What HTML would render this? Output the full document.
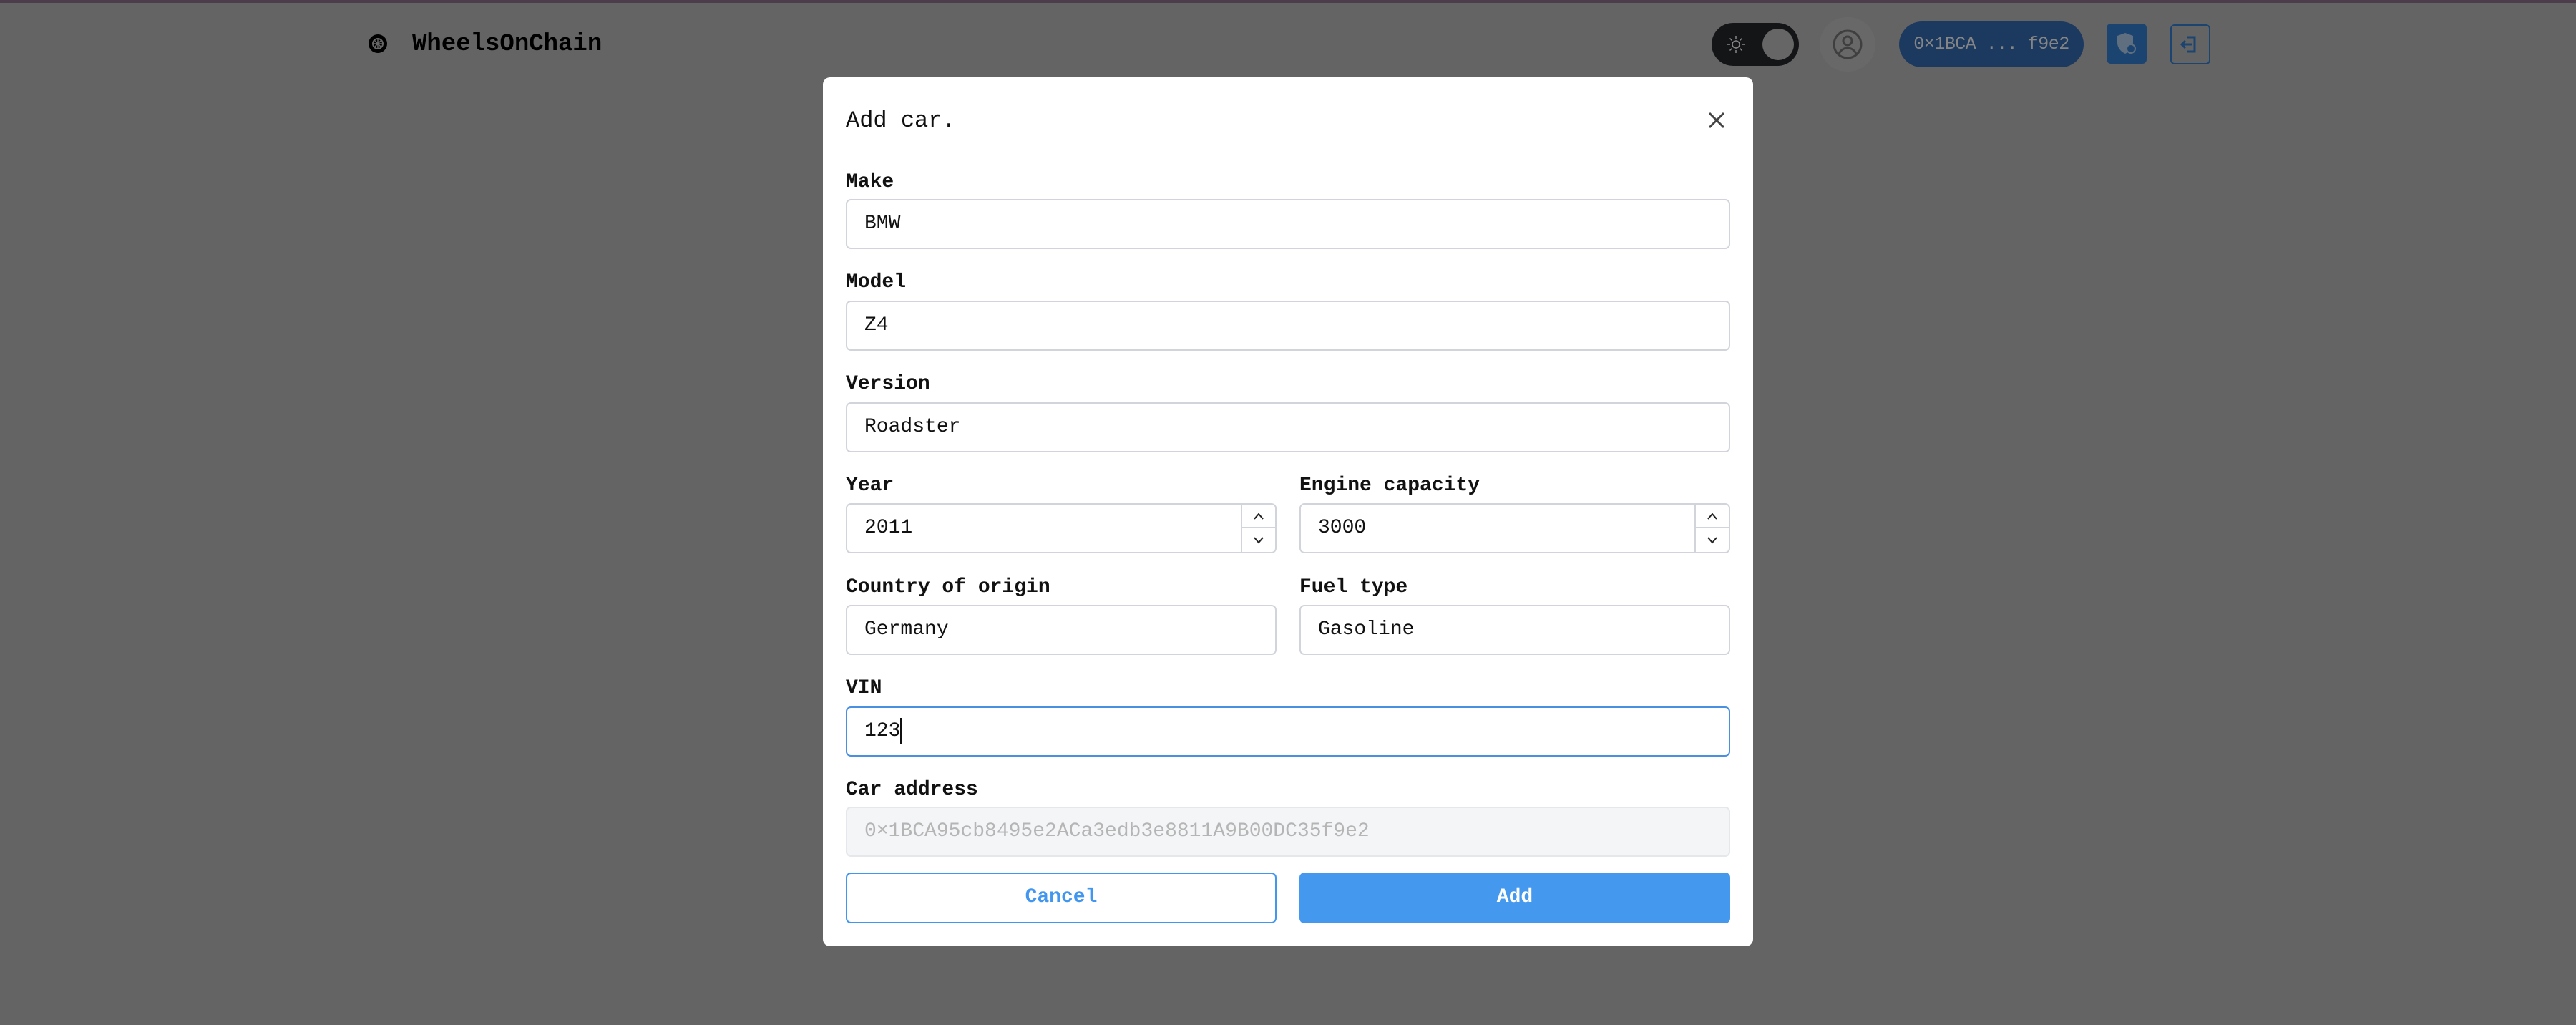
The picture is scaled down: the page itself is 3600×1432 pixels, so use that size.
<!DOCTYPE html>
<html><head><meta charset="utf-8"><style>
*{box-sizing:border-box;margin:0;padding:0}
body{width:3600px;height:1432px;background:#646464;position:relative;overflow:hidden;font-family:"Liberation Mono",monospace;}
.topline{position:absolute;left:0;top:0;width:3600px;height:4px;background:#4d3c4b}
.a{position:absolute}
.lbl{position:absolute;font-size:28px;font-weight:bold;color:#111;line-height:34px}
.inp{position:absolute;height:70px;border:2px solid #d1d5db;border-radius:7px;background:#fff;font-size:28px;color:#111;line-height:66px;padding-left:24px}
.spin{position:absolute;right:0;top:0;width:48px;height:66px;border-left:2px solid #d1d5db}
.spin div{height:33px;border-bottom:2px solid #d1d5db;display:flex;align-items:center;justify-content:center}
.spin div:last-child{border-bottom:none}
</style></head><body>
<div class="topline"></div>
<svg class="a" style="left:513px;top:46px" width="30" height="30" viewBox="0 0 30 30"><circle cx="15" cy="15" r="13" fill="#000"/><circle cx="15" cy="15" r="7" fill="none" stroke="#666" stroke-width="2"/><path d="M15 8v14M8 15h14M10 10l10 10M20 10l-10 10" stroke="#666" stroke-width="1.5"/></svg>
<div class="a" style="left:576px;top:42px;font-size:34px;font-weight:bold;color:#000;line-height:40px">WheelsOnChain</div>

<div class="a" style="left:2392px;top:32px;width:122px;height:60px;border-radius:30px;background:#141517"></div>
<svg class="a" style="left:2412px;top:48px" width="28" height="28" viewBox="0 0 28 28"><circle cx="14" cy="14" r="5" fill="none" stroke="#888" stroke-width="1.5"/><path d="M14 2v4M14 22v4M2 14h4M22 14h4M5.5 5.5l3 3M19.5 19.5l3 3M5.5 22.5l3-3M19.5 8.5l3-3" stroke="#888" stroke-width="1.5"/></svg>
<div class="a" style="left:2463px;top:40px;width:44px;height:44px;border-radius:22px;background:#666"></div>
<div class="a" style="left:2543px;top:24px;width:78px;height:76px;border-radius:39px;background:#686868"></div>
<svg class="a" style="left:2560px;top:40px" width="44" height="44" viewBox="0 0 44 44"><circle cx="22" cy="22" r="19" fill="none" stroke="#3f3f3f" stroke-width="3"/><circle cx="22" cy="17" r="6" fill="none" stroke="#3f3f3f" stroke-width="3"/><path d="M10 35c3-6 8-8 12-8s9 2 12 8" fill="none" stroke="#3f3f3f" stroke-width="3"/></svg>
<div class="a" style="left:2654px;top:30px;width:258px;height:64px;border-radius:32px;background:#1c3a60;color:#858585;font-size:25px;line-height:64px;text-align:center;letter-spacing:-0.5px">0×1BCA ... f9e2</div>
<div class="a" style="left:2944px;top:33px;width:56px;height:56px;border-radius:6px;background:#1c4470"></div>
<svg class="a" style="left:2956px;top:44px" width="32" height="34" viewBox="0 0 32 34"><path d="M14 2l11 4v9c0 8-5 13-11 16C8 28 3 23 3 15V6z" fill="#5f6f7f"/><circle cx="22" cy="24" r="6" fill="#1c4470" stroke="#5f6f7f" stroke-width="2"/></svg>
<div class="a" style="left:3033px;top:34px;width:56px;height:56px;border-radius:6px;border:2px solid #1c4470"></div>
<svg class="a" style="left:3043px;top:44px" width="36" height="36" viewBox="0 0 36 36"><path d="M14 8h10v20H14" fill="none" stroke="#1c4470" stroke-width="3"/><path d="M20 18H6M11 13l-5 5 5 5" fill="none" stroke="#1c4470" stroke-width="3"/></svg>

<div class="a" style="left:1150px;top:108px;width:1300px;height:1214px;background:#fff;border-radius:10px"></div>
<div class="a" style="left:1182px;top:150px;font-size:32px;color:#111;line-height:38px">Add car.</div>
<svg class="a" style="left:2385px;top:154px" width="28" height="28" viewBox="0 0 28 28"><path d="M4 4l20 20M24 4L4 24" stroke="#444" stroke-width="3"/></svg>

<div class="lbl" style="left:1182px;top:238px">Make</div>
<div class="inp" style="left:1182px;top:278px;width:1236px">BMW</div>
<div class="lbl" style="left:1182px;top:378px">Model</div>
<div class="inp" style="left:1182px;top:420px;width:1236px">Z4</div>
<div class="lbl" style="left:1182px;top:520px">Version</div>
<div class="inp" style="left:1182px;top:562px;width:1236px">Roadster</div>
<div class="lbl" style="left:1182px;top:662px">Year</div>
<div class="inp" style="left:1182px;top:703px;width:602px">2011<div class="spin"><div><svg width="18" height="12"><path d="M3 10l6-7 6 7" fill="none" stroke="#222" stroke-width="2"/></svg></div><div><svg width="18" height="12"><path d="M3 2l6 7 6-7" fill="none" stroke="#222" stroke-width="2"/></svg></div></div></div>
<div class="lbl" style="left:1816px;top:662px">Engine capacity</div>
<div class="inp" style="left:1816px;top:703px;width:602px">3000<div class="spin"><div><svg width="18" height="12"><path d="M3 10l6-7 6 7" fill="none" stroke="#222" stroke-width="2"/></svg></div><div><svg width="18" height="12"><path d="M3 2l6 7 6-7" fill="none" stroke="#222" stroke-width="2"/></svg></div></div></div>
<div class="lbl" style="left:1182px;top:804px">Country of origin</div>
<div class="inp" style="left:1182px;top:845px;width:602px">Germany</div>
<div class="lbl" style="left:1816px;top:804px">Fuel type</div>
<div class="inp" style="left:1816px;top:845px;width:602px">Gasoline</div>
<div class="lbl" style="left:1182px;top:945px">VIN</div>
<div class="inp" style="left:1182px;top:987px;width:1236px;border-color:#4a90e2">123<span style="display:inline-block;width:2px;height:36px;background:#111;vertical-align:middle"></span></div>
<div class="lbl" style="left:1182px;top:1087px">Car address</div>
<div class="inp" style="left:1182px;top:1127px;width:1236px;background:#f4f5f7;border-color:#e5e7eb;color:#b5b5b5">0×1BCA95cb8495e2ACa3edb3e8811A9B00DC35f9e2</div>
<div class="inp" style="left:1182px;top:1219px;width:602px;height:71px;border-color:#4196f0;color:#4196f0;text-align:center;padding:0;font-weight:bold">Cancel</div>
<div class="inp" style="left:1816px;top:1219px;width:602px;height:71px;border-color:#4499ee;background:#4499ee;color:#fff;text-align:center;padding:0;font-weight:bold">Add</div>
</body></html>
